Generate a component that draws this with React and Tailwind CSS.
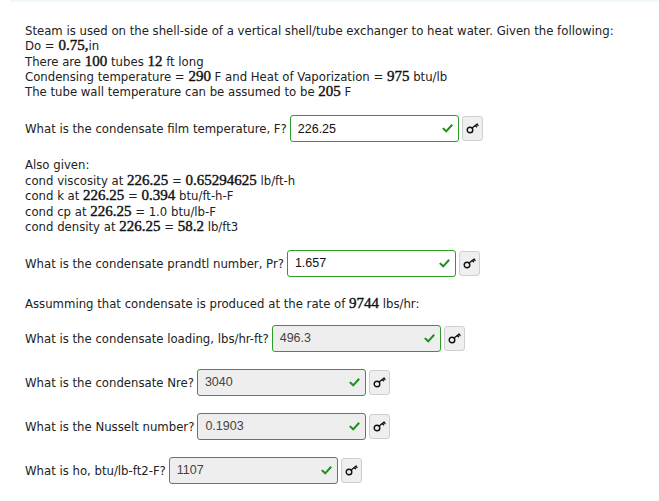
import React from 'react';

const SANS = { fontFamily: '"DejaVu Sans Condensed", "DejaVu Sans", sans-serif' };

function M({ children }) {
  return (
    <span className="inline-block font-['Liberation_Serif',serif] text-[15px] leading-[14px] text-[#111] [-webkit-text-stroke:0.4px_#111]">
      {children}
    </span>
  );
}

function KeyIcon() {
  return (
    <svg width="13" height="11" viewBox="0 0 13 11" fill="none" stroke="#111" strokeWidth="1.4" strokeLinecap="round">
      <circle cx="4" cy="7" r="2.8" />
      <path d="M6.1 5 L11 1.2" />
      <path d="M9.3 2.4 L10.6 3.8" />
      <path d="M11 1.2 L12 2.4" />
    </svg>
  );
}

function Check() {
  return (
    <svg width="11" height="9" viewBox="0 0 11 9" fill="none" stroke="#1f8f1f" strokeWidth="2" strokeLinecap="square">
      <path d="M1.5 4.8 L4.2 7.3 L9.5 1.5" />
    </svg>
  );
}

function Question({ label, value, filled, className }) {
  return (
    <div className={`flex items-center ${className}`}>
      <span className="text-[13px] text-[#222] whitespace-nowrap">{label}</span>
      <div
        className={`ml-[3px] flex h-[27px] w-[169px] items-center justify-between rounded-[3px] border border-[#2aa02a] pl-[7px] pr-[5px] ${
          filled ? 'bg-[#eeeeee] text-[#444]' : 'bg-white text-[#111]'
        }`}
      >
        <span className="font-['Liberation_Sans',sans-serif] text-[12.5px]">{value}</span>
        <Check />
      </div>
      <button className="ml-[3px] flex h-[25px] w-[21px] items-center justify-center rounded-[3px] border border-[#cfcfcf] bg-[#efefef]">
        <KeyIcon />
      </button>
    </div>
  );
}

export default function App() {
  return (
    <div className="h-[501px] w-[659px] overflow-hidden bg-white" style={SANS}>
      <div className="ml-[10px] h-[2px] bg-[#f0fbf0]" />
      <div className="pl-[25px] text-[13px] text-[#222]">
        {/* ── Problem statement ─────────────────── */}
        <div className="mt-[21px] leading-[15.3px]">
          <div>Steam is used on the shell-side of a vertical shell/tube exchanger to heat water. Given the following:</div>
          <div>Do = <M>0.75,</M>in</div>
          <div>There are <M>100</M> tubes <M>12</M> ft long</div>
          <div>Condensing temperature = <M>290</M> F and Heat of Vaporization = <M>975</M> btu/lb</div>
          <div>The tube wall temperature can be assumed to be <M>205</M> F</div>
        </div>

        <Question className="mt-[16px]" label="What is the condensate film temperature, F?" value="226.25" />

        {/* ── Also given ────────────────────────── */}
        <div className="mt-[15px] leading-[15.5px]">
          <div>Also given:</div>
          <div>cond viscosity at <M>226.25</M> = <M>0.65294625</M> lb/ft-h</div>
          <div>cond k at <M>226.25</M> = <M>0.394</M> btu/ft-h-F</div>
          <div>cond cp at <M>226.25</M> = 1.0 btu/lb-F</div>
          <div>cond density at <M>226.25</M> = <M>58.2</M> lb/ft3</div>
        </div>

        <Question className="mt-[15px]" label="What is the condensate prandtl number, Pr?" value="1.657" />

        <div className="mt-[19px] leading-[15px]">
          Assumming that condensate is produced at the rate of <M>9744</M> lbs/hr:
        </div>

        <Question className="mt-[14px]" label="What is the condensate loading, lbs/hr-ft?" value="496.3" filled />
        <Question className="mt-[17px]" label="What is the condensate Nre?" value="3040" filled />
        <Question className="mt-[17px]" label="What is the Nusselt number?" value="0.1903" filled />
        <Question className="mt-[17px]" label="What is ho, btu/lb-ft2-F?" value="1107" filled />
      </div>
    </div>
  );
}
